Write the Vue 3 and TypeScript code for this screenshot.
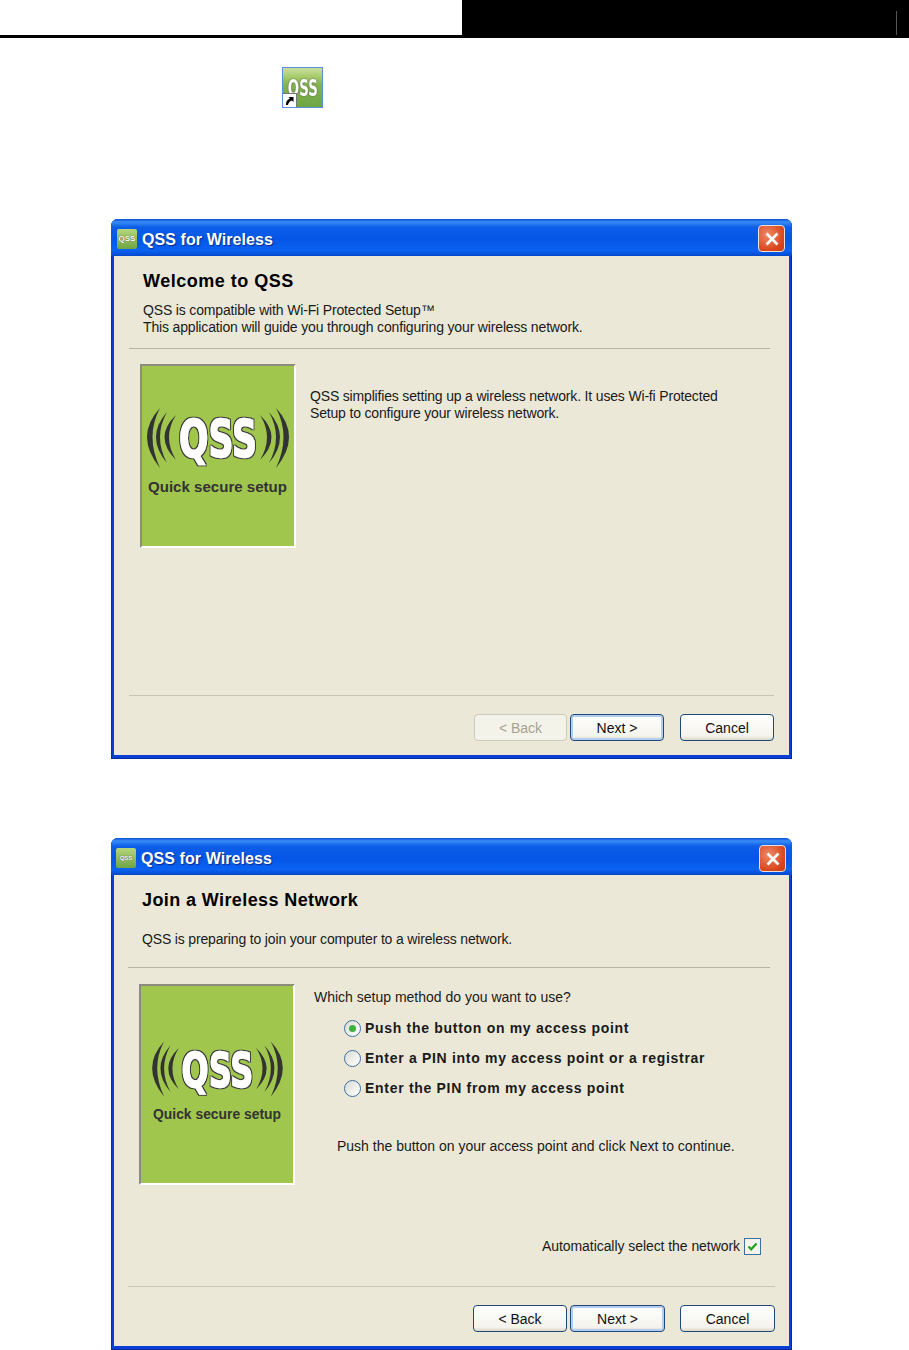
<script setup lang="ts">
type Wizard = {
  id: string;
  variant: string;
  heading: string;
  intro: string[];
  artTransform: string;
  backDisabled: boolean;
};

const wizards: Wizard[] = [
  {
    id: "welcome",
    variant: "wizard--welcome",
    heading: "Welcome to QSS",
    intro: [
      "QSS is compatible with Wi-Fi Protected Setup™",
      "This application will guide you through configuring your wireless network.",
    ],
    artTransform: "",
    backDisabled: true,
  },
  {
    id: "join",
    variant: "wizard--join",
    heading: "Join a Wireless Network",
    intro: ["QSS is preparing to join your computer to a wireless network."],
    artTransform: "translate(6.7 17) scale(.92)",
    backDisabled: false,
  },
];

const methods = [
  { label: "Push the button on my access point", checked: true },
  { label: "Enter a PIN into my access point or a registrar", checked: false },
  { label: "Enter the PIN from my access point", checked: false },
];

// crescents of the signal mark, the right side is mirrored around x=78
const arcs = [
  "M20 44Q-6 72 20 104Q5 72 20 44Z",
  "M27 48Q5 73 27 99Q13 73 27 48Z",
  "M36 51Q13 73 36 96Q22 73 36 51Z",
];
</script>

<template>
  <div class="page">
    <header class="top-bar">
      <div class="top-bar-left"></div>
      <div class="top-bar-right"><span class="top-bar-tick"></span></div>
    </header>

    <div class="shortcut-row">
      <div class="shortcut">
        <span class="shortcut-label">OSS</span>
        <span class="shortcut-arrow">
          <svg width="13" height="13" viewBox="0 0 13 13">
            <path d="M3 11C3 7 5 5 7 4.500L5.500 3H10.500V8L9 6.500C7 7 5.500 8.500 5 11Z" fill="#000" />
          </svg>
        </span>
      </div>
    </div>

    <section v-for="w in wizards" :key="w.id" class="wizard" :class="w.variant">
      <div class="titlebar">
        <span class="app-icon">QSS</span>
        <span class="titlebar-text">QSS for Wireless</span>
        <button class="close-btn" type="button">
          <svg width="16" height="16" viewBox="0 0 16 16">
            <path d="M2.500 2.500L13.500 13.500M13.500 2.500L2.500 13.500" stroke="#fff" stroke-width="2.600" />
          </svg>
        </button>
      </div>

      <div class="client">
        <div class="intro">
          <h2 class="heading">{{ w.heading }}</h2>
          <div class="intro-text">
            <div v-for="line in w.intro" :key="line">{{ line }}</div>
          </div>
        </div>
        <div class="divider"></div>

        <div class="content">
          <svg class="logo" viewBox="2 2 152 197" preserveAspectRatio="xMinYMin slice">
            <defs>
              <filter :id="'outline-' + w.id" x="-10%" y="-10%" width="120%" height="120%">
                <feMorphology in="SourceAlpha" operator="dilate" radius="1.3" result="grown" />
                <feFlood flood-color="#3a3a3a" />
                <feComposite in2="grown" operator="in" />
                <feMerge>
                  <feMergeNode />
                  <feMergeNode in="SourceGraphic" />
                </feMerge>
              </filter>
            </defs>
            <g :transform="w.artTransform">
              <path v-for="a in arcs" :key="a" :d="a" fill="#333" />
              <g transform="translate(156 0) scale(-1 1)">
                <path v-for="a in arcs" :key="a" :d="a" fill="#333" />
              </g>
              <text
                class="logo-mark"
                x="39"
                y="93"
                textLength="78"
                lengthAdjust="spacingAndGlyphs"
                :filter="'url(#outline-' + w.id + ')'"
              >QSS</text>
              <text class="logo-caption" x="8" y="128" textLength="139" lengthAdjust="spacingAndGlyphs">Quick secure setup</text>
            </g>
          </svg>

          <div v-if="w.id === 'welcome'" class="copy">
            <p>QSS simplifies setting up a wireless network. It uses Wi-fi Protected</p>
            <p>Setup to configure your wireless network.</p>
          </div>

          <div v-else class="setup">
            <div class="setup-question">Which setup method do you want to use?</div>
            <label v-for="m in methods" :key="m.label" class="method">
              <span class="radio"><span v-if="m.checked" class="radio-dot"></span></span>
              <span class="method-label">{{ m.label }}</span>
            </label>
            <div class="setup-hint">Push the button on your access point and click Next to continue.</div>
            <div class="auto-row">
              <span>Automatically select the network</span>
              <span class="checkbox">
                <svg width="13" height="13" viewBox="0 0 13 13">
                  <path d="M2.500 6.500L5.200 9.300L10.500 3.500" fill="none" stroke="#21a121" stroke-width="2.200" />
                </svg>
              </span>
            </div>
          </div>
        </div>

        <div class="footer">
          <div class="footer-divider"></div>
          <div class="footer-buttons">
            <button class="btn" :class="{ 'btn--disabled': w.backDisabled }" type="button">&lt; Back</button>
            <button class="btn btn--default" type="button">Next &gt;</button>
            <button class="btn btn--cancel" type="button">Cancel</button>
          </div>
        </div>
      </div>
    </section>
  </div>
</template>

<style scoped>
.page {
  width: 909px;
  height: 1350px;
  overflow: hidden;
  background: #fff;
  font-family: "Liberation Sans", Arial, sans-serif;
  font-size: 14px;
  color: #1a1a1a;
}

.top-bar {
  display: flex;
  height: 38px;
}

.top-bar-left {
  width: 462px;
  border-bottom: 3px solid #000;
}

.top-bar-right {
  flex: 1;
  background: #000;
  display: flex;
  justify-content: flex-end;
  padding: 11px 12px 3px 0;
}

.top-bar-tick {
  width: 1px;
  background: #555;
}

.shortcut-row {
  margin: 29px 0 0 282px;
  height: 41px;
}

.shortcut {
  position: relative;
  box-sizing: border-box;
  width: 41px;
  height: 41px;
  border: 1px solid #5b8fdc;
  background: linear-gradient(#c8e0a0 0%, #a8cc6c 22%, #84b450 42%, #6ea544 100%);
  display: flex;
  justify-content: center;
  padding-top: 6px;
}

.shortcut-label {
  font-family: "DejaVu Sans", sans-serif;
  font-size: 23px;
  font-weight: 700;
  line-height: 28px;
  color: #fff;
  transform: scaleX(.58);
  text-shadow: 0 0 2px #444;
}

.shortcut-arrow {
  position: absolute;
  left: 0;
  bottom: 0;
  width: 13px;
  height: 13px;
  background: #fff;
  border-right: 1px solid #777;
  border-top: 1px solid #777;
  display: flex;
}

.wizard {
  box-sizing: border-box;
  width: 681px;
  margin-left: 111px;
  border-radius: 7px 7px 0 0;
  background: #0a3fd6;
  box-shadow: inset -1px -1px 0 #082a9c, inset 1px 0 0 #082fb0;
  display: flex;
  flex-direction: column;
}

.wizard--welcome {
  margin-top: 111px;
  height: 540px;
}

.wizard--join {
  margin-top: 79px;
  height: 512px;
}

.titlebar {
  height: 37px;
  flex: none;
  display: flex;
  align-items: center;
  padding: 0 7px 0 6px;
  border-radius: 7px 7px 0 0;
  background: linear-gradient(#0a4fd8 0%, #3a8cf8 8%, #0c5ee8 22%, #0556e6 55%, #0a62f2 85%, #0448cc 100%);
}

.app-icon {
  width: 20px;
  height: 20px;
  margin: 2px 5px 0 0;
  border-radius: 2px;
  background: linear-gradient(#b6d67c, #6ea544);
  color: #fff;
  font-size: 8px;
  font-weight: 700;
  line-height: 20px;
  text-align: center;
  text-shadow: 0 0 1px #333;
}

.titlebar-text {
  flex: 1;
  margin-top: 4px;
  font-size: 16px;
  font-weight: 700;
  letter-spacing: .08px;
  color: #fff;
  text-shadow: 1px 1px 1px #0a2a8a;
}

.close-btn {
  width: 27px;
  height: 27px;
  margin-top: 2px;
  padding: 0;
  border: 1px solid #f0e0d8;
  border-radius: 4px;
  background: radial-gradient(circle at 35% 35%, #ee8a68, #d9451c 70%, #c83c14);
  display: flex;
  align-items: center;
  justify-content: center;
}

.client {
  flex: 1;
  margin: 0 3px 4px;
  background: #ebe8d8;
  display: flex;
  flex-direction: column;
}

.intro {
  padding: 15px 0 12px 29px;
}

.heading {
  margin: 0;
  font-family: "Liberation Sans", Arial, sans-serif;
  font-size: 18px;
  line-height: 20px;
  font-weight: 700;
  letter-spacing: .5px;
  color: #000;
}

.intro-text {
  margin-top: 11px;
  line-height: 17px;
  letter-spacing: -.16px;
}

.divider {
  flex: none;
  height: 1px;
  width: 641px;
  margin-left: 15px;
  background: #b8b5a4;
}

.content {
  flex: 1;
  display: flex;
  padding: 15px 0 0 26px;
}

.logo {
  flex: none;
  width: 152px;
  height: 180px;
  background: #a0c64e;
  border: 2px solid;
  border-color: #8c8c7c #fff #fff #8c8c7c;
}

.logo-mark {
  font-family: "DejaVu Sans", sans-serif;
  font-size: 52px;
  font-weight: 700;
  fill: #fff;
  stroke: #fff;
  stroke-width: 1.500;
}

.logo-caption {
  font-size: 15px;
  font-weight: 700;
  fill: #333;
}

.copy {
  margin: 24px 0 0 14px;
  line-height: 17px;
  letter-spacing: -.17px;
}

.copy p {
  margin: 0;
}

.footer {
  flex: none;
}

.footer-divider {
  height: 1px;
  width: 645px;
  margin-left: 15px;
  background: #c8c5b4;
}

.footer-buttons {
  display: flex;
  justify-content: flex-end;
  padding: 18px 15px 14px 0;
}

.btn {
  box-sizing: border-box;
  width: 93px;
  height: 27px;
  padding: 0;
  margin-right: 3px;
  border: 1px solid #1f4a78;
  border-radius: 4px;
  background: linear-gradient(#fff, #f4f3ec 85%, #dcd8c8);
  font-family: "Liberation Sans", Arial, sans-serif;
  font-size: 14px;
  color: #111;
}

.btn--disabled {
  border-color: #cdcabb;
  background: #f4f3ea;
  color: #a5a294;
}

.btn--default {
  width: 94px;
  margin-right: 16px;
  box-shadow: inset 0 0 0 2px #b4cdf0;
}

.btn--cancel {
  width: 94px;
  margin-right: 0;
}

.wizard--join .titlebar {
  padding: 0 6px 0 5px;
}

.wizard--join .app-icon {
  font-size: 6px;
}

.wizard--join .close-btn {
  margin-top: 4px;
}

.wizard--join .intro {
  padding: 15px 0 19px 28px;
}

.wizard--join .heading {
  letter-spacing: .4px;
}

.wizard--join .intro-text {
  margin-top: 21px;
}

.wizard--join .divider {
  width: 642px;
  margin-left: 14px;
}

.wizard--join .content {
  padding: 16px 0 0 25px;
}

.wizard--join .logo {
  height: 197px;
}

.wizard--join .footer-divider {
  width: 647px;
  margin-left: 14px;
}

.wizard--join .footer-buttons {
  padding-right: 14px;
}

.wizard--join .btn {
  width: 94px;
}

.wizard--join .btn--default,
.wizard--join .btn--cancel {
  width: 95px;
}

.wizard--join .btn--default {
  margin-right: 15px;
}

.wizard--join .btn--cancel {
  margin-right: 0;
}

.setup {
  flex: 1;
  padding: 5px 28px 0 19px;
  line-height: 17px;
}

.setup-question {
  margin-bottom: 7px;
}

.method {
  display: flex;
  align-items: center;
  height: 30px;
  padding-left: 30px;
}

.radio {
  box-sizing: border-box;
  width: 17px;
  height: 17px;
  border: 1px solid #3f6f9f;
  border-radius: 50%;
  background: linear-gradient(135deg, #dcdcd4, #fff);
  display: flex;
  align-items: center;
  justify-content: center;
  margin-right: 4px;
}

.radio-dot {
  width: 7px;
  height: 7px;
  border-radius: 50%;
  background: #3cb03c;
}

.method-label {
  font-weight: 700;
  letter-spacing: .7px;
}

.setup-hint {
  margin: 35px 0 0 23px;
}

.auto-row {
  display: flex;
  justify-content: flex-end;
  align-items: center;
  gap: 4px;
  margin-top: 83px;
  letter-spacing: -.06px;
}

.checkbox {
  box-sizing: border-box;
  width: 17px;
  height: 17px;
  border: 1px solid #3f6f9f;
  background: #f4f4ec;
  display: flex;
  align-items: center;
  justify-content: center;
}
</style>
